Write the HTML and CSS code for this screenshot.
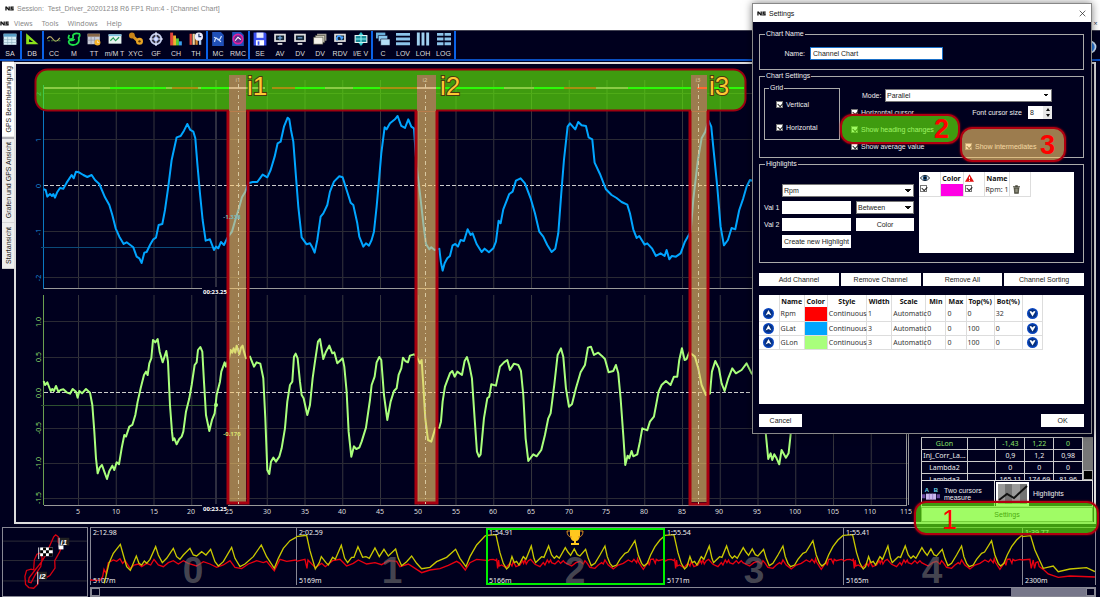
FILE: index.html
```
<!DOCTYPE html>
<html lang="en">
<head>
    <meta charset="UTF-8">
    <title>Session: Test_Driver_20201218 R6 FP1 Run:4 - [Channel Chart]</title>
    <link rel="stylesheet" href="styles.css">
</head>
<body>
<svg class="defs" aria-hidden="true">
    <symbol id="logo" viewBox="0 0 28 18"><path d="M1 3h5l5 7V3h4v12h-4L5 8v7H1z" fill="#111"/><path d="M17 3h10v4h-6v1h6v7H16v-3h7v-1h-6z" fill="#111"/></symbol>
    <symbol id="win" viewBox="0 0 24 24"><path d="M2 3h20v14H2z" fill="#ddd"/><path d="M5 6h14v8H5z" fill="#123"/><path d="M8 19h8v3H8z" fill="#ddd"/></symbol>
    <symbol id="up" viewBox="0 0 22 22"><circle cx="11" cy="11" r="11" fill="#0a46c0"/><circle cx="11" cy="11" r="8" fill="#06307e"/><path d="M11 4l6 11-6-3-6 3z" fill="#fff"/></symbol>
    <symbol id="down" viewBox="0 0 22 22"><circle cx="11" cy="11" r="11" fill="#0a46c0"/><circle cx="11" cy="11" r="8" fill="#06307e"/><path d="M5 7l3-1 3 3 3-3 3 1-6 10z" fill="#fff"/></symbol>
</svg>

<header class="title"><svg class="logo"><use href="#logo"/></svg><span>Session: &nbsp;Test_Driver_20201218 R6 FP1 Run:4 - [Channel Chart]</span></header>
<nav class="menu">
    <svg class="logo"><use href="#logo"/></svg>
    <a href="#">Views</a><a href="#">Tools</a><a href="#">Windows</a><a href="#">Help</a>
    <button class="mdi-close">×</button>
</nav>

<div class="toolbar">
    <div class="group">
        <button><svg viewBox="0 0 24 24"><path d="M1 3h22v19H1z" fill="#d8eef8"/><path d="M1 3h22v5H1z" fill="#5aa0c8"/><path d="M8 8v14M15 8v14M1 13h22M1 18h22" stroke="#8ab" fill="none"/></svg>SA</button>
    </div>
    <div class="group">
        <button><svg viewBox="0 0 24 24"><path d="M2 2v19h21zM7 12l7 5H7z" fill="#8be01c" fill-rule="evenodd"/></svg>DB</button>
    </div>
    <div class="group">
        <button><svg viewBox="0 0 24 24"><path d="M0 12q5-8 10 0t12-2" stroke="#bcae6a" stroke-width="2" fill="none"/><path d="M1 15h22" stroke="#4a7a3a" stroke-width="2" stroke-dasharray="4 2"/></svg>CC</button>
        <button><svg viewBox="0 0 24 24"><path d="M4 5q-4 8 3 7 5-1 3-6 2-5 11-3 2 3-1 7 2 8-4 11-7 3-12-1-3-5 2-6 5 1 7-2" stroke="#1ee04a" stroke-width="3" fill="none"/></svg>M</button>
        <button><svg viewBox="0 0 24 24"><path d="M1 3h21v18H1z" fill="#c8ccd8"/><path d="M1 3h21v5H1z" fill="#8a6a4a"/><path d="M7 8v13M13 8v13M1 14h21" stroke="#889" fill="none"/><circle cx="18" cy="18" r="5" fill="#f6b32a"/><path d="M18 15v3h3" stroke="#fff" fill="none"/></svg>TT</button>
        <button class="wide"><svg viewBox="0 0 24 24"><path d="M1 4h22v16H1z" fill="#e6f4f0"/><path d="M1 4h22v3H1z" fill="#7cc0e0"/><path d="M4 15l5-5 4 5 6-6" stroke="#2a9a5a" stroke-width="2" fill="none"/></svg>m/M T</button>
        <button class="wide"><svg viewBox="0 0 24 24"><path d="M4 5l14 13" stroke="#d89420" stroke-width="5"/><circle cx="5" cy="6" r="5" fill="#c88418"/><circle cx="18" cy="16" r="6" fill="#e8a424"/><circle cx="18" cy="16" r="2" fill="#5a3808"/></svg>XYC</button>
        <button><svg viewBox="0 0 24 24"><circle cx="12" cy="12" r="9" stroke="#c8d0f0" stroke-width="3" fill="#334"/><circle cx="12" cy="12" r="4" fill="#9ab0ff"/><path d="M12 0v24M0 12h24" stroke="#e8ecff" stroke-width="2"/></svg>GF</button>
        <button><svg viewBox="0 0 24 24"><path d="M2 1h5v22H2z" fill="#e0453a"/><path d="M7 6h5v17H7z" fill="#f0b030"/><path d="M12 11h5v12h-5z" fill="#58c838"/><path d="M17 16h5v7h-5z" fill="#3aa0f0"/></svg>CH</button>
        <button><svg viewBox="0 0 24 24"><path d="M1 3h4v19H1z" fill="#e0453a"/><path d="M6 3h4v19H6z" fill="#f0d8a0"/><path d="M11 8h4v14h-4z" fill="#d88a30"/><path d="M17 14h4v8h-4z" fill="#a8c8f0"/><circle cx="17" cy="8" r="7" fill="#eef"/><path d="M17 3v5h4" stroke="#236" stroke-width="2" fill="none"/></svg>TH</button>
    </div>
    <div class="group">
        <button><svg viewBox="0 0 24 24"><path d="M2 0h15l5 5v19H2z" fill="#2050b8"/><path d="M6 17q2-10 5-5t7-5M5 9q8 2 12 8" stroke="#cfe0ff" stroke-width="2" fill="none"/></svg>MC</button>
        <button><svg viewBox="0 0 24 24"><path d="M2 0h15l5 5v19H2z" fill="#2050b8"/><circle cx="12" cy="12" r="8" stroke="#e020a0" stroke-width="3" fill="#602a90"/><path d="M7 15l5-6 5 4" stroke="#fff" stroke-width="2" fill="none"/></svg>RMC</button>
    </div>
    <div class="group">
        <button><svg viewBox="0 0 24 24"><path d="M1 1h20l2 2v20H1z" fill="#3a50f0"/><path d="M6 1h12v9H6z" fill="#e8ecff"/><path d="M5 14h14v9H5z" fill="#fff"/><path d="M8 16h3v6H8z" fill="#3a50f0"/></svg>SE</button>
        <button><svg viewBox="0 0 24 24"><use href="#win"/><path d="M12 6v8M8 10h8" stroke="#7ad" stroke-width="2"/></svg>AV</button>
        <button><svg viewBox="0 0 24 24"><use href="#win"/><path d="M8 10h8" stroke="#7ad" stroke-width="2"/></svg>DV</button>
        <button><svg viewBox="0 0 24 24"><path d="M7 3h16v12H7z" fill="#a8a49a"/><path d="M4 6h16v12H4z" fill="#d8d4c8" stroke="#443"/><path d="M1 9h16v12H1z" fill="#f4f2ea" stroke="#443"/></svg>DV</button>
        <button><svg viewBox="0 0 24 24"><use href="#win"/><path d="M8 14a4 4 0 1 1 6-1l3-5" stroke="#4aa0ff" stroke-width="3" fill="none"/></svg>RDV</button>
        <button class="wide"><svg viewBox="0 0 24 24"><path d="M12 0l5 6H7zM12 24l5-6H7z" fill="#28c0c8"/><path d="M2 6h20v12H2z" stroke="#e8f4f4" stroke-width="2" fill="#1a8a98"/><path d="M2 12h20M12 4v16" stroke="#8ee" stroke-width="2"/></svg>I/E V</button>
    </div>
    <div class="group">
        <button><svg viewBox="0 0 24 24"><path d="M0 1h16v10H0z" fill="#6ab0dc"/><path d="M4 6h16v10H4z" fill="#8cc8ee" stroke="#01001e"/><path d="M8 12h16v11H8z" fill="#b4def6" stroke="#01001e"/></svg>C</button>
        <button><svg viewBox="0 0 24 24"><path d="M0 4h24M0 12h24M0 20h24" stroke="#8cc4ea" stroke-width="5"/></svg>LOV</button>
        <button><svg viewBox="0 0 24 24"><path d="M4 1v22M12 1v22M20 1v22" stroke="#a0d0ee" stroke-width="5"/></svg>LOH</button>
        <button class="wide"><svg viewBox="0 0 24 24"><path d="M0 4h24M0 12h24M0 20h24" stroke="#8cc4ea" stroke-width="5" stroke-dasharray="11 2"/></svg>LOG</button>
    </div>
    <button class="help" aria-label="Help"><svg viewBox="0 0 24 24"><circle cx="12" cy="12" r="11" fill="#cfe4ff"/><circle cx="12" cy="12" r="8" fill="#2a7ae0"/></svg></button>
</div>

<main class="workspace">
    <div class="tabs">
        <button class="selected">GPS Beschleunigung</button>
        <button>Grafen und GPS Ansicht</button>
        <button>Startansicht</button>
    </div>
    <div class="panel">
        <svg class="chart" viewBox="16 64 896 458">
            <defs>
                <pattern id="cols" x="78" y="0" width="37.75" height="600" patternUnits="userSpaceOnUse"><path d="M.5 0v600" stroke="#34343c"/></pattern>
            </defs>
            <path d="M44 80h864v208H44zM44 295h864v210H44z" fill="url(#cols)"/>
            <path class="grid" d="M44 93.5h864M44 139.5h864M44 231.5h864M44 277.5h864M44 321.5h864M44 357.5h864M44 428.5h864M44 463.5h864M44 498.5h864"/>
            <path class="zero" d="M44 185.5h864M44 392.5h864"/>
            <path d="M43.5 85v204" stroke="#0a78c0"/>
            <path d="M43.5 295v210" stroke="#6aa050"/>
            <path class="axis" d="M44 288.5h158M228 288.5h679M44 505.5h158M228 505.5h679M906.5 80v425M908.5 80v425"/>
            <path d="M41 247.5h175" stroke="#0a4a78"/>
            <path d="M41 405.5h175" stroke="#2e5030"/>
            <path d="M216 80v208M216 295v210" stroke="#2e2e40" stroke-width="2"/>

            <polyline class="glat" transform="translate(0 60) scale(.3333)" points="131,388 137,390 142,410 150,402 156,408 160,402 165,413 172,396 180,384 190,386 200,368 208,356 215,345 221,355 228,335 237,337 250,345 262,351 275,345 285,360 298,372 315,412 328,435 337,465 347,505 358,530 371,552 380,547 400,562 410,590 418,595 425,609 433,578 440,576 450,555 460,538 468,533 476,495 487,492 495,450 505,380 515,300 530,232 542,228 552,212 562,192 571,210 580,215 586,235 592,310 600,400 608,480 617,542 630,538 642,570 648,560 655,565 663,546 672,555 682,534 696,515 706,480 716,448 726,412 736,395 745,370 758,366 772,366 788,344 802,352 812,330 824,290 833,250 842,245 852,200 863,173 868,178 873,210 880,245 888,350 895,440 905,532 920,553 930,550 936,560 944,578 952,540 962,470 970,460 982,435 990,395 1002,365 1018,349 1028,352 1040,390 1052,428 1060,435 1072,490 1078,530 1090,560 1098,550 1107,557 1115,540 1122,515 1130,440 1138,350 1144,280 1154,202 1160,208 1170,190 1185,178 1193,168 1204,198 1215,204 1225,178 1234,200 1242,205 1250,320 1260,400 1270,490 1278,552 1288,568 1294,562 1304,570 1318,566 1323,608 1328,632 1334,610 1342,595 1350,588 1358,556 1366,552 1374,560 1382,540 1392,543 1403,508 1412,525 1418,520 1430,552 1445,576 1454,566 1467,577 1480,565 1488,545 1496,482 1502,490 1510,448 1528,402 1538,395 1548,362 1562,355 1575,370 1592,415 1605,460 1618,515 1630,530 1642,555 1655,576 1666,566 1675,520 1684,400 1692,300 1703,200 1710,190 1726,208 1735,186 1745,196 1758,198 1766,232 1777,238 1784,308 1800,342 1818,388 1835,405 1850,414 1865,426 1882,434 1890,460 1900,508 1910,534 1918,528 1934,554 1942,550 1956,565 1968,588 1982,580 1994,588 2000,570 2008,598 2016,588 2028,590 2042,580 2055,545 2072,515 2080,420 2094,300 2105,235 2116,215 2126,182 2134,200 2142,280 2152,380 2162,500 2172,556 2184,540 2195,504 2206,508 2218,450 2230,415 2240,380 2250,360 2262,364"/>
            <polyline class="glon" transform="translate(0 285) scale(.3333)" points="131,288 135,300 142,292 152,318 157,312 162,318 168,303 175,320 182,315 190,313 200,322 210,326 218,312 228,320 233,338 238,318 246,325 258,312 270,323 277,360 283,440 288,520 293,565 299,548 306,540 313,560 321,582 328,558 337,542 343,555 350,532 357,538 365,490 373,450 378,455 388,425 397,420 406,390 413,350 422,310 432,270 438,260 443,270 448,235 454,220 459,165 466,172 473,162 479,200 488,232 499,198 504,230 510,360 516,440 519,466 523,460 530,478 538,462 545,455 550,440 558,380 568,340 575,300 584,240 590,232 594,195 601,186 607,200 612,290 618,390 628,438 636,405 644,385 650,330 660,290 664,260 674,232 678,245 688,215 692,195 697,203 701,190 706,203 710,182 718,208 723,188 728,182 732,200 738,220 750,215 762,245 770,232 781,236 790,280 796,400 802,555 808,567 813,530 820,518 828,530 838,515 845,490 855,430 862,350 870,300 877,290 882,215 887,206 893,220 900,290 905,330 911,340 922,390 930,360 938,280 945,230 954,170 960,162 970,222 978,200 988,182 997,205 1003,202 1012,235 1028,220 1033,245 1040,320 1046,440 1054,515 1062,484 1069,492 1078,488 1085,470 1098,428 1110,345 1115,300 1124,275 1130,232 1138,216 1144,225 1152,330 1162,405 1172,350 1182,318 1190,310 1196,270 1204,250 1209,218 1216,228 1224,232 1230,212 1242,208 1250,215 1260,235 1265,225 1270,300 1276,400 1284,465 1294,470 1306,430 1318,428 1323,410 1328,350 1335,305 1350,265 1357,258 1364,275 1372,260 1386,270 1394,228 1401,216 1408,240 1416,280 1424,400 1431,500 1437,515 1442,508 1452,400 1462,340 1468,335 1474,298 1488,302 1500,245 1512,232 1522,225 1530,255 1542,236 1555,240 1563,258 1570,330 1577,460 1585,528 1600,508 1610,514 1624,495 1635,450 1645,400 1652,385 1663,300 1673,210 1683,190 1690,215 1698,310 1707,365 1716,358 1728,310 1742,262 1755,240 1764,188 1773,185 1782,210 1795,203 1805,212 1815,222 1826,262 1840,258 1848,240 1855,265 1862,340 1870,450 1876,540 1883,512 1888,520 1895,498 1900,514 1912,508 1920,470 1927,430 1942,436 1950,410 1962,395 1976,320 1985,300 1998,288 2012,300 2022,275 2032,275 2038,225 2046,190 2054,225 2060,222 2068,202 2085,215 2095,250 2105,300 2118,330 2130,326 2136,260 2146,228 2157,250 2165,295 2174,318 2185,280 2197,250 2208,265 2225,255 2240,235 2255,265 2290,300 2298,450 2305,522 2312,505 2317,525 2323,508 2330,520 2338,538 2345,495 2358,518 2366,505 2372,450 2380,300"/>
            <circle cx="216" cy="405" r="2" fill="#a9ff7c"/>

            <g class="ylab blue">
                <text transform="translate(41 94) rotate(-90)">2</text>
                <text transform="translate(41 140) rotate(-90)">1</text>
                <text transform="translate(41 186) rotate(-90)">0</text>
                <text transform="translate(41 232) rotate(-90)">-1</text>
                <text transform="translate(41 278) rotate(-90)">-2</text>
            </g>
            <g class="ylab green">
                <text transform="translate(41 322) rotate(-90)">1.0</text>
                <text transform="translate(41 357) rotate(-90)">0.5</text>
                <text transform="translate(41 393) rotate(-90)">0.0</text>
                <text transform="translate(41 428) rotate(-90)">-0.5</text>
                <text transform="translate(41 463) rotate(-90)">-1.0</text>
                <text transform="translate(41 498) rotate(-90)">-1.5</text>
            </g>
            <g class="xlab">
                <text x="78" y="514">5</text><text x="116" y="514">10</text><text x="154" y="514">15</text><text x="191" y="514">20</text><text x="229" y="514">25</text><text x="267" y="514">30</text><text x="305" y="514">35</text><text x="342" y="514">40</text><text x="380" y="514">45</text><text x="418" y="514">50</text><text x="456" y="514">55</text><text x="493" y="514">60</text><text x="531" y="514">65</text><text x="569" y="514">70</text><text x="606" y="514">75</text><text x="644" y="514">80</text><text x="682" y="514">85</text><text x="719" y="514">90</text><text x="757" y="514">95</text><text x="795" y="514">100</text><text x="833" y="514">105</text><text x="870" y="514">110</text><text x="906" y="514">115</text>
            </g>
            <path d="M202 287h25v8h-25zM202 504h25v8h-25z" fill="#00001e"/>

            <rect class="mark-go" x="35.500" y="69.500" width="710" height="41" rx="12"/>
            <g class="heading">
                <path d="M44 88h66M166 88h6M198 88h3M237 88h28M325 88h28M504 88h30M596 88h32" stroke="#8acb45"/>
                <path d="M110 88h56M201 88h34M295 88h30M353 88h27M436 88h68M534 88h30M628 88h64M710 88h34" stroke="#2cfb08"/>
                <path d="M172 88h26M272 88h23M380 88h37M564 88h32" stroke="#a89010"/>
            </g>
            <path d="M229 75h17v36h-17zM417 75h19v36h-19zM691 75h16v36h-16z" fill="#00001e"/>
            <path class="mark-inter" d="M229 75h17v427h-17zM417 75h19v427h-19zM691 75h16v427h-16z"/>
            <path d="M229 88h17M417 88h19" stroke="#d8b888" stroke-width="2"/>
            <path d="M697 88h10" stroke="#ff6a30" stroke-width="2"/>
            <path class="edge" d="M228 111v392h20V111M416 111v392h21V111M690 111v393h18V111"/>
            <path class="inter" d="M238.500 84v420M425.500 84v420M698.500 84v420"/>
            <text class="time" x="215" y="294">00:23.25</text>
            <text class="time" x="215" y="511">00:23.25</text>
            <text class="value blue" x="232" y="219">-1.338</text>
            <text class="value green" x="232" y="436">-0.176</text>
            <g class="inter-name"><text x="238" y="82">i1</text><text x="425" y="82">i2</text><text x="698" y="82">i3</text></g>
            <g class="big"><text x="247" y="95">i1</text><text x="440" y="95">i2</text><text x="709" y="95">i3</text></g>
        </svg>

        <aside class="side">
            <div class="values">
                <table>
                    <tr class="glon-row"><td>GLon</td><td></td><td>-1,43</td><td>1,22</td><td>0</td></tr>
                    <tr><td>Inj_Corr_La...</td><td></td><td>0,9</td><td>1,2</td><td>0,98</td></tr>
                    <tr><td>Lambda2</td><td></td><td>0</td><td>0</td><td>0</td></tr>
                    <tr><td>Lambda3</td><td></td><td>165,11</td><td>174,69</td><td>81,96</td></tr>
                </table>
                <div class="vbar"><span></span></div>
            </div>
            <div class="tools">
                <button><svg class="cursors" viewBox="0 0 54 42"><path d="M0 22h10v12H0zM44 22h10v12H44z" fill="#6a4aa0"/><path d="M12 20h30v18H12z" fill="#cbb8ee"/><path d="M22 20v18M32 20v18" stroke="#8a70c0" stroke-width="2"/><text x="8" y="14">A</text><text x="35" y="14">B</text></svg><span>Two cursors measure</span></button>
                <button><svg class="hl" viewBox="0 0 33 24"><path d="M1 1h31v22H1z" fill="#9a9a9a" stroke="#fff" stroke-width="2"/><path d="M9 2h7v20H9zM24 2h7v20h-7z" fill="#747474"/><path d="M3 18l8-6 7 4L31 4" stroke="#111" stroke-width="2" fill="none"/></svg><span>Highlights</span></button>
            </div>
            <button class="settings">Settings</button>
            <div class="note note-1">1</div>
        </aside>
    </div>
</main>

<footer class="bottom">
    <svg class="map" viewBox="0 0 86 70">
        <path d="M0 13.500h86M0 33.500h86M0 54.500h86" stroke="#2c2c38"/>
        <polyline transform="translate(-2 -7) scale(.3333)" points="162,48 168,42 176,48 176,65 186,80 180,95 165,122 166,145 150,168 138,175 116,170 112,195 100,207 85,205 75,195 73,170 78,152 92,148 100,150 102,120 110,102 122,98 126,115 122,140 105,165 92,190 84,188 86,175 105,150 125,125 140,100 150,75 162,48" fill="none" stroke="#d80010" stroke-width="4"/>
        <path d="M57 17h5v5h-5z" fill="#fff"/>
        <path d="M38 20h13v9H38z" fill="#fff"/><path d="M41 20h3v3h-3zM47 20h4v3h-4zM38 23h3v3h-3zM44 23h3v3h-3zM41 26h3v3h-3zM47 26h4v3h-4z" fill="#000"/>
        <path d="M57 10h11v8H57zM35 45h10v8H35z" fill="#222"/>
        <path d="M57.500 20V10M35.500 58V45M36.500 32V20" stroke="#ddd"/>
        <text x="59" y="17">i1</text><text x="37" y="52">i2</text>
    </svg>
    <div class="laps">
        <svg class="laps-chart" viewBox="90 527 1006 59">
            <defs>
                <g id="lap">
                    <polyline class="rpm" points="0,124 10,119 20,118 28,122 30,116 33,145 36,120 38,138 45,135 58,143 70,130 76,138 80,124 88,140 100,135 108,122 111,130 115,120 119,132 125,122 132,118 145,133 160,140 170,128 175,135 182,120 187,128 192,120 195,128 205,132 215,122 222,130 230,122 235,128 255,138 268,128 280,124 290,132 295,122 302,130 310,142 325,145 335,135 345,128 350,132 355,120 365,135 380,147 395,135 410,130 425,120 436,126 442,118 450,128 453,116 456,126 470,148 478,136 485,125 488,136 492,118 500,117 506,130 509,118 515,122 530,118 536,120"/>
                    <polyline class="speed" points="0,46 28,44 40,98 50,130 60,147 67,140 76,110 83,128 90,124 97,135 110,110 118,118 134,78 142,115 147,128 155,120 165,110 172,112 186,78 195,105 203,115 210,108 218,115 236,83 244,96 252,106 263,87 272,104 280,108 297,88 305,115 314,137 325,130 340,105 355,78 362,110 370,130 378,140 390,135 400,118 415,100 424,96 445,62 455,105 465,130 472,138 482,130 492,105 505,80 520,60 536,46"/>
                </g>
            </defs>
            <path d="M90 527.500h1006" stroke="#888894"/>
            <path d="M90.500 527v58M296.500 527v58M486.500 527v58M664.500 527v58M843.500 527v58M1022.500 527v58M1095.500 527v58" stroke="#888894"/>
            <g transform="translate(0 520) scale(.3333)">
                <polyline class="rpm" points="270,180 300,181 308,170 312,148 318,160 325,128 340,120 350,124 360,116 368,130 375,122 391,146 402,135 415,132 425,140 440,130 452,135 462,118 475,135 490,140 505,128 520,122 535,132 550,122 565,130 590,138 610,125 630,132 650,142 670,135 690,122 705,142 725,146 745,132 770,122 790,128 800,124 823,152 835,128 840,118 860,124 888,120"/>
                <polyline class="speed" points="313,190 320,160 327,130 340,100 361,73 370,105 380,140 391,151 400,130 409,108 417,130 425,135 433,123 440,130 450,118 467,80 475,105 487,128 500,115 520,85 530,110 540,118 550,105 570,85 580,105 590,108 605,95 618,105 632,88 645,125 655,138 670,125 695,82 705,115 720,140 735,132 760,110 784,75 800,110 823,145 835,115 850,85 870,62 888,52"/>
                <polyline class="rpm" points="888,124 915,118 921,145 924,120 946,143 965,130 976,140 998,122 1020,118 1040,138 1060,130 1075,120 1100,132 1125,128 1145,134 1165,122 1190,124 1200,140 1225,132 1250,148 1265,158 1290,150 1320,146 1345,136 1370,124 1380,130 1396,150 1410,128 1430,118 1460,121"/>
                <polyline class="speed" points="888,50 920,46 930,92 946,147 958,128 964,110 978,128 985,135 998,112 1006,118 1024,76 1034,115 1043,128 1055,112 1062,112 1074,80 1088,112 1098,110 1108,115 1125,84 1138,110 1152,88 1165,108 1187,87 1195,115 1205,137 1220,125 1235,108 1250,130 1265,146 1290,142 1310,125 1340,112 1367,88 1380,115 1398,140 1410,110 1430,75 1455,48 1460,46"/>
                <use href="#lap" x="1460"/><use href="#lap" x="1994"/><use href="#lap" x="2530"/>
                <polyline class="rpm" points="3066,120 3090,118 3094,145 3100,120 3104,145 3108,128 3114,125 3118,140 3130,148 3145,162 3175,172 3210,168 3285,171"/>
                <polyline class="speed" points="3066,50 3092,47 3105,90 3130,145 3160,138 3175,155 3210,147 3260,143 3285,155"/>
            </g>
            <g class="lap-no"><text x="193" y="583">0</text><text x="392" y="583">1</text><text x="575" y="583">2</text><text x="754" y="583">3</text><text x="932" y="583">4</text></g>
            <rect x="487" y="529" width="177" height="55" fill="none" stroke="#00f000" stroke-width="2"/>
            <path d="M570 530h10v6q-1 5-4 5v2h3v2h-8v-2h3v-2q-3 0-4-5z" fill="#ffc81e"/>
            <path d="M570 531h-3q0 6 5 6M580 531h3q0 6-5 6" stroke="#e0901e" fill="none"/>
            <g class="lap-text">
                <text x="93" y="535">2:12.98</text><text x="299" y="535">2:02.59</text><text x="489" y="535">1:54.91</text><text x="667" y="535">1:55.54</text><text x="846" y="535">1:55.41</text><text x="1025" y="535">1:39.77</text>
                <text x="93" y="583">5107m</text><text x="299" y="583">5169m</text><text x="489" y="583">5166m</text><text x="667" y="583">5171m</text><text x="846" y="583">5165m</text><text x="1025" y="583">2300m</text>
            </g>
        </svg>
        <div class="hbar"><span class="end"></span><span class="thumb"></span><span class="end"></span></div>
    </div>
</footer>

<section class="dialog">
    <div class="dialog-title"><svg class="logo"><use href="#logo"/></svg><span>Settings</span><button aria-label="Close"><svg viewBox="0 0 10 10"><path d="M1 1l8 8M9 1l-8 8" stroke="#222" fill="none"/></svg></button></div>
    <form class="dialog-body">
        <fieldset class="chart-name">
            <legend>Chart Name</legend>
            <label for="name">Name:</label>
            <input id="name" type="text" value="Channel Chart">
        </fieldset>
        <fieldset class="chart-settings">
            <legend>Chart Settings</legend>
            <fieldset class="grid-box">
                <legend>Grid</legend>
                <label><input type="checkbox" checked>Vertical</label>
                <label><input type="checkbox" checked>Horizontal</label>
            </fieldset>
            <div class="options">
                <div class="row mode"><label for="mode">Mode:</label><select id="mode"><option>Parallel</option></select></div>
                <div class="row"><label><input type="checkbox" checked>Horizontal cursor</label><label class="push" for="size">Font cursor size</label><span class="spin"><input id="size" type="text" value="8"><span><i></i><i class="dn"></i></span></span></div>
                <div class="row"><label><input type="checkbox" checked>Show heading changes</label></div>
                <div class="row two"><label><input type="checkbox" checked>Show average value</label><label><input type="checkbox" checked>Show intermediates</label></div>
            </div>
            <div class="note note-2">2</div>
            <div class="note note-3">3</div>
        </fieldset>
        <fieldset class="highlights">
            <legend>Highlights</legend>
            <div class="hl-form">
                <select class="span" aria-label="Channel"><option>Rpm</option></select>
                <label for="v1">Val 1</label><input id="v1" type="text"><select aria-label="Condition"><option>Between</option></select>
                <label for="v2">Val 2</label><input id="v2" type="text"><button type="button">Color</button>
                <button type="button" class="create">Create new Highlight</button>
            </div>
            <div class="list">
                <table>
                    <tr>
                        <th><svg class="eye" viewBox="0 0 30 22"><path d="M1 11Q15-5 29 11 15 27 1 11z" fill="#fff" stroke="#123" stroke-width="3"/><circle cx="15" cy="11" r="7" fill="#1a4a78"/><circle cx="15" cy="11" r="3"/></svg></th>
                        <th>Color</th>
                        <th><svg class="warn" viewBox="0 0 28 24"><path d="M14 0l14 24H0z" fill="#e01010"/><path d="M14 8v8M14 18v3" stroke="#fff" stroke-width="3"/></svg></th>
                        <th>Name</th><th></th>
                    </tr>
                    <tr>
                        <td><input type="checkbox" checked aria-label="Visible"></td><td class="magenta"></td><td><input type="checkbox" checked aria-label="Warn"></td><td>Rpm: 1</td>
                        <td><svg class="bin" viewBox="0 0 22 26"><path d="M2 7h18l-2 19H4zM0 3h22v3H0zM7 0h8v3H7z" fill="#4a4a3c"/><path d="M7 10v12M11 10v12M15 10v12" stroke="#b8b8a4" stroke-width="2"/></svg></td>
                    </tr>
                </table>
            </div>
        </fieldset>
        <div class="actions"><button type="button">Add Channel</button><button type="button">Remove Channel</button><button type="button">Remove All</button><button type="button">Channel Sorting</button></div>
        <div class="channels">
            <table>
                <colgroup><col class="c20"><col class="c25"><col class="c22"><col class="c40"><col class="c25"><col class="c34"><col class="c20"><col class="c20"><col class="c28"><col class="c28"><col class="c20"></colgroup>
                <tr><th></th><th>Name</th><th>Color</th><th>Style</th><th>Width</th><th>Scale</th><th>Min</th><th>Max</th><th>Top(%)</th><th>Bot(%)</th><th></th></tr>
                <tr><td><svg class="move"><use href="#up"/></svg></td><td>Rpm</td><td class="red"></td><td>Continuous</td><td>1</td><td>Automatic</td><td>0</td><td>0</td><td>0</td><td>32</td><td><svg class="move"><use href="#down"/></svg></td></tr>
                <tr><td><svg class="move"><use href="#up"/></svg></td><td>GLat</td><td class="azure"></td><td>Continuous</td><td>3</td><td>Automatic</td><td>0</td><td>0</td><td>100</td><td>0</td><td><svg class="move"><use href="#down"/></svg></td></tr>
                <tr><td><svg class="move"><use href="#up"/></svg></td><td>GLon</td><td class="lime"></td><td>Continuous</td><td>3</td><td>Automatic</td><td>0</td><td>0</td><td>100</td><td>0</td><td><svg class="move"><use href="#down"/></svg></td></tr>
            </table>
        </div>
        <div class="confirm"><button type="button">Cancel</button><button type="button">OK</button></div>
    </form>
</section>
</body>
</html>
```
FILE: styles.css
```
*{
    margin: 0;
    padding: 0;
    box-sizing: border-box;
}
body{
    position: relative;
    min-height: 100vh;
    background: #00001e;
    color: #eee;
    font-family: "Liberation Sans", Arial, sans-serif;
    font-size: 7px;
    line-height: 9px;
}
button,input,select{
    font: inherit;
    color: #222;
    background: #fff;
    border: 0;
    border-radius: 0;
}
svg{
    display: block;
}
.defs{
    position: absolute;
    width: 0;
    height: 0;
}
.logo{
    width: 9px;
    height: 7px;
    flex: none;
}

/* window bars */
.title,.menu{
    display: flex;
    align-items: center;
    background: #fff;
    color: #8a8a8a;
}
.title{
    height: 17px;
    padding-left: 5px;
    gap: 3px;
}
.menu{
    height: 13px;
    gap: 9px;
    font-family: "Noto Sans", sans-serif;
}
.menu .logo{
    margin-right: -4px;
}
.menu a{
    color: inherit;
    text-decoration: none;
}
.mdi-close{
    margin-left: auto;
    width: 9px;
    color: #345;
}
.toolbar{
    display: flex;
    height: 31px;
    border-top: 1px solid #445;
    border-bottom: 2px solid #0a4fc0;
}
.group{
    display: flex;
    border-right: 2px solid #0a62e8;
}
.toolbar button{
    display: flex;
    flex-direction: column;
    align-items: center;
    gap: 3px;
    width: 20px;
    padding-top: 1px;
    background: none;
    color: #ddd;
    white-space: nowrap;
}
.toolbar .wide{
    width: 21px;
}
.toolbar button svg{
    width: 14px;
    height: 14px;
}
.toolbar .help{
    margin-left: auto;
    padding-top: 9px;
}

/* main area */
.workspace{
    display: flex;
    padding: 1px 4px 0 2px;
}
.tabs{
    display: flex;
    flex-direction: column;
    width: 12px;
}
.tabs button{
    writing-mode: vertical-rl;
    transform: rotate(180deg);
    width: 12px;
    padding: 4px 0;
    background: #eee;
    border-top: 1px solid #ccc;
    white-space: nowrap;
    text-align: left;
}
.tabs .selected{
    background: #fff;
}
.panel{
    display: flex;
    flex: 1;
    border: 2px solid #ddd;
}
.chart{
    flex: 1;
    min-width: 0;
}
.chart text{
    font-family: "Noto Sans", sans-serif;
    font-size: 7px;
    fill: #ddd;
}
.grid{
    stroke: #2a2a34;
}
.zero{
    stroke: #ccc;
    stroke-dasharray: 4 2;
}
.axis{
    stroke: #999;
}
.glat,.glon{
    fill: none;
    stroke: #00a5ff;
    stroke-width: 6;
    stroke-linejoin: round;
}
.glon{
    stroke: #a9ff7c;
}
.ylab text,.xlab text,.chart .time,.inter-name text{
    text-anchor: middle;
}
.chart .blue text,.chart .blue{
    fill: #1a8ad8;
}
.chart .green text,.chart .green{
    fill: #8ad868;
}
.chart .time{
    fill: #fff;
    font-weight: bold;
    font-size: 6px;
}
.chart .value{
    text-anchor: middle;
    font-weight: bold;
    font-size: 6px;
}
.chart .value.green{
    fill: #d8e070;
}
.chart .value.blue{
    fill: #7ab8b8;
}
.mark-go{
    fill: rgba(102, 250, 6, .62);
    stroke: #9c0010;
    stroke-width: 2;
}
.mark-inter{
    fill: rgba(251, 200, 108, .62);
}
.edge{
    fill: none;
    stroke: #a80010;
    stroke-width: 3;
}
.heading path{
    stroke-width: 2;
}
.inter{
    stroke: #d8c8a0;
    stroke-dasharray: 4 3 1 3;
}
.chart .inter-name text{
    font-size: 6px;
    fill: #d8c8a0;
}
.chart .big text{
    font-family: "Liberation Sans", sans-serif;
    font-size: 26px;
    fill: #ffc832;
    stroke: #4a3a10;
    stroke-width: 2;
    paint-order: stroke;
}

/* side panel */
.side{
    position: relative;
    display: flex;
    flex-direction: column;
    justify-content: flex-end;
    width: 182px;
    padding: 0 1px 0 9px;
}
.values{
    display: flex;
    height: 43px;
    overflow: hidden;
    font-family: "Noto Sans", sans-serif;
}
.values table{
    flex: 1;
    border-collapse: collapse;
    table-layout: fixed;
}
.values td{
    height: 12px;
    border: 1px solid #ccc;
    text-align: center;
    white-space: nowrap;
    width: 29px;
}
.values td:first-child{
    width: 46px;
}
.glon-row{
    color: #8ee66a;
}
.vbar{
    display: flex;
    align-items: flex-end;
    width: 10px;
    background: #777;
}
.vbar span{
    width: 10px;
    height: 10px;
    background: #000;
    border: 1px solid #aaa;
}
.tools{
    display: grid;
    grid-template-columns: 72px 1fr;
    border: 1px solid #ddd;
}
.tools button{
    display: flex;
    align-items: center;
    gap: 4px;
    height: 25px;
    background: none;
    color: #eee;
    text-align: left;
    line-height: 7px;
}
.tools button + button{
    border-left: 1px solid #ddd;
    padding-left: 1px;
}
.cursors{
    flex: none;
    width: 18px;
    height: 14px;
}
.cursors text{
    font-size: 18px;
    font-weight: bold;
    fill: #6ad8e8;
}
.hl{
    flex: none;
    width: 33px;
    height: 24px;
}
.settings{
    height: 15px;
    border: 1px solid #888;
}
.note{
    position: absolute;
    background: rgba(102, 250, 6, .62);
    border: 2px solid #b00010;
    box-shadow: 0 0 2px #b00010;
    border-radius: 12px;
    color: #f00;
    font-family: "Liberation Sans", sans-serif;
    font-size: 27px;
    font-weight: bold;
    pointer-events: none;
}
.note-1{
    left: 2px;
    right: -5px;
    bottom: -13px;
    height: 34px;
    padding-left: 26px;
    line-height: 34px;
    font-weight: normal;
}

/* laps */
.bottom{
    display: flex;
    gap: 2px;
    padding: 3px 4px 0 2px;
}
.map{
    width: 86px;
    height: 70px;
    border: 1px solid #888894;
}
.map text{
    fill: #fff;
    font-size: 8px;
    font-weight: bold;
    font-style: italic;
}
.laps{
    flex: 1;
}
.rpm,.speed{
    fill: none;
    stroke: #e80010;
    stroke-width: 4;
}
.speed{
    stroke: #c8c800;
}
.lap-no text{
    font-family: "Liberation Sans", sans-serif;
    font-size: 37px;
    font-weight: bold;
    fill: rgba(110, 110, 110, .65);
    text-anchor: middle;
}
.lap-text text{
    font-family: "Noto Sans", sans-serif;
    font-size: 7px;
    fill: #eee;
}
.hbar{
    display: flex;
    justify-content: space-between;
    height: 10px;
    margin-top: 1px;
    border: 1px solid #888894;
}
.hbar .end{
    width: 9px;
    border: 1px solid #888894;
}
.hbar .thumb{
    width: 75px;
    margin-left: auto;
    background: #77778a;
}

/* settings dialog */
.dialog{
    position: absolute;
    top: 3px;
    right: 8px;
    width: 340px;
    background: #00001e;
    border: 1px solid #888;
    box-shadow: 0 0 8px rgba(0, 0, 0, .5);
}
.dialog-title{
    display: flex;
    align-items: center;
    gap: 3px;
    height: 18px;
    padding: 0 5px 0 4px;
    background: #fff;
    color: #111;
}
.dialog-title button{
    display: flex;
    align-items: center;
    margin-left: auto;
}
.dialog-title button svg{
    width: 7px;
    height: 7px;
}
.dialog-body{
    padding: 8px 7px 6px 6px;
}
fieldset{
    border: 1px solid #aaa;
    min-width: 0;
}
legend{
    height: 8px;
    line-height: 8px;
    margin-left: 5px;
    padding: 0 1px;
}
.dialog label{
    display: flex;
    align-items: center;
    white-space: nowrap;
}
.dialog input[type=text],.dialog select,.dialog button{
    height: 13px;
}
.dialog input[type=text]{
    min-width: 0;
    padding: 0 2px;
}
.dialog select{
    appearance: none;
    min-width: 0;
    padding: 0 1px;
    border: 1px solid #777;
    background: #fff conic-gradient(from -45deg at 50% 100%, #111 90deg, transparent 0) no-repeat right 2px center / 6px 3px;
}
input[type=checkbox]{
    appearance: none;
    width: 7px;
    height: 7px;
    margin-right: 2px;
    background: #fff;
    border: 1px solid #777;
    position: relative;
}
input[type=checkbox]:checked::after{
    content: "";
    position: absolute;
    left: 1px;
    top: 0;
    width: 4px;
    height: 3px;
    border: solid #222;
    border-width: 0 0 1px 1px;
    transform: rotate(-45deg);
}
.chart-name{
    display: flex;
    padding: 9px 0;
}
.chart-name label{
    justify-content: flex-end;
    width: 45px;
}
.chart-name input{
    width: 133px;
    margin-left: 5px;
    border: 1px solid #1a70c8;
}
.chart-settings{
    position: relative;
    display: flex;
    gap: 11px;
    margin-top: 2px;
    padding: 4px 31px 4px 4px;
}
.chart-settings > legend,.highlights > legend{
    margin-left: 1px;
}
.grid-box{
    align-self: flex-start;
    width: 76px;
    padding: 8px 0 7px 11px;
}
.grid-box label + label{
    margin-top: 14px;
}
.grid-box legend{
    margin-left: -7px;
}
.grid-box input[type=checkbox],.options input[type=checkbox]{
    margin-right: 3px;
}
.options{
    display: grid;
    flex: 1;
    gap: 4px;
    padding-top: 5px;
}
.row{
    display: flex;
    align-items: center;
    height: 13px;
}
.mode label{
    width: 34px;
    padding-left: 11px;
}
.mode select{
    flex: 1;
}
.push{
    margin: 0 6px 0 auto;
}
.spin{
    display: flex;
    width: 24px;
    background: #fff;
}
.spin input{
    width: 15px;
}
.spin span{
    display: grid;
    align-content: center;
    gap: 3px;
    width: 9px;
    padding-left: 3px;
    background: #e8e8e8;
}
.spin i{
    border: solid transparent;
    border-width: 0 2px 3px;
    border-bottom-color: #111;
    width: 4px;
}
.spin .dn{
    transform: scaleY(-1);
}
.two{
    display: grid;
    grid-template-columns: 114px 1fr;
}
.note-2{
    left: 80px;
    top: 34px;
    width: 120px;
    height: 30px;
    padding-left: 92px;
    line-height: 27px;
}
.note-3{
    left: 200px;
    top: 47px;
    width: 106px;
    height: 35px;
    padding-left: 78px;
    line-height: 33px;
    background: rgba(251, 200, 108, .62);
}
.highlights{
    display: flex;
    gap: 5px;
    margin-top: 2px;
    padding: 4px 9px 9px 4px;
}
.hl-form{
    display: grid;
    grid-template-columns: 13px 69px 58px;
    align-content: start;
    gap: 4px 5px;
    padding-top: 12px;
}
.hl-form label{
    margin-right: -4px;
}
.hl-form .span{
    grid-column: 2 / 4;
}
.hl-form .create{
    grid-column: 2;
    white-space: nowrap;
}
.list{
    flex: 1;
    height: 81px;
    background: #fff;
}
.list table,.channels table{
    border-collapse: collapse;
    table-layout: fixed;
    color: #333;
    font-family: "Noto Sans", sans-serif;
}
.list td,.channels td,.list th,.channels th{
    height: 12px;
    border-right: 1px solid #ddd;
    padding: 0 1px;
    text-align: left;
    white-space: nowrap;
}
.list th,.channels th{
    color: #111;
    text-align: center;
}
.list td,.channels td{
    border-bottom: 1px solid #ddd;
}
.list th:nth-child(1),.list th:nth-child(3),.list th:nth-child(5){
    width: 21px;
}
.list th:nth-child(2){
    width: 23px;
}
.list th:nth-child(4){
    width: 24px;
}
.eye{
    width: 10px;
    height: 8px;
}
.warn{
    width: 9px;
    height: 8px;
}
.bin{
    width: 7px;
    height: 9px;
    margin-left: 2px;
}
.magenta{ background: #ff00e4; }
.red{ background: #f00; }
.azure{ background: #00a5ff; }
.lime{ background: #a9ff7c; }
.actions{
    display: grid;
    grid-template-columns: repeat(4, 1fr);
    gap: 2px;
    margin-top: 10px;
}
.channels{
    min-height: 109px;
    margin-top: 9px;
    background: #fff;
}
.channels table{
    width: 284px;
}
.channels td{
    height: 14px;
}
.c20{ width: 20px; }
.c22{ width: 23px; }
.c25{ width: 25px; }
.c28{ width: 28px; }
.c34{ width: 34px; }
.c40{ width: 39px; }
.move{
    width: 11px;
    height: 11px;
    margin: 0 auto;
}
.confirm{
    display: flex;
    justify-content: space-between;
    margin-top: 10px;
}
.confirm button{
    width: 43px;
}
```
